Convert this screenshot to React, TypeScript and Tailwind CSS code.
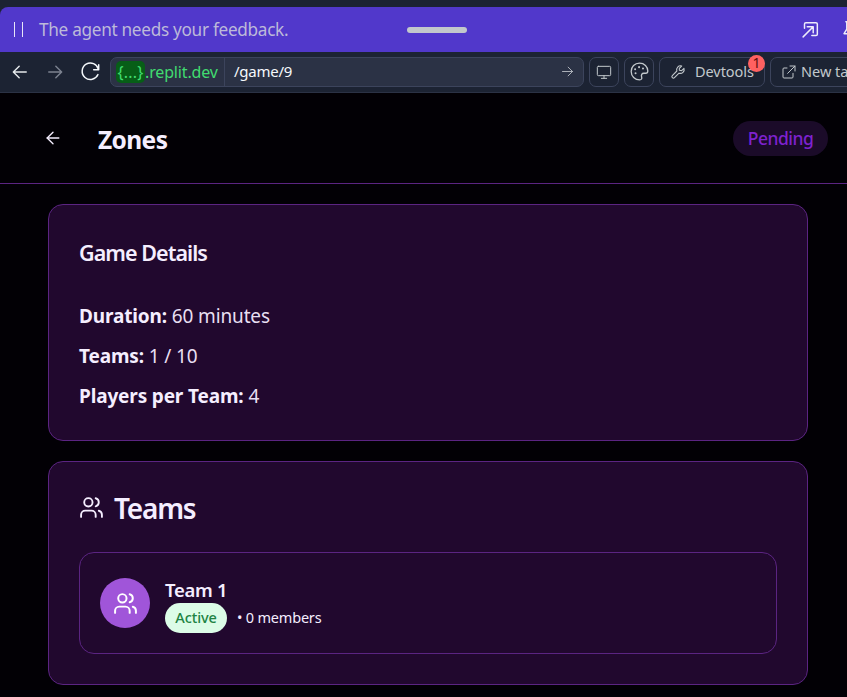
import type { ReactNode } from 'react';
import { ArrowLeft, Users } from 'lucide-react';

type GlyphProps = { size: number; className?: string; stroke?: number; children: ReactNode };

function Glyph({ size, className = '', stroke = 1.5, children }: GlyphProps) {
  return (
    <svg
      width={size}
      height={size}
      viewBox="0 0 24 24"
      fill="none"
      stroke="currentColor"
      strokeWidth={stroke}
      strokeLinecap="round"
      strokeLinejoin="round"
      className={`shrink-0 ${className}`}
    >
      {children}
    </svg>
  );
}

function AgentBanner() {
  return (
    <div className="flex h-[45px] shrink-0 items-center rounded-tl-[8px] bg-[#5138cb] pl-[14px]">
      <div className="flex w-[9px] shrink-0 justify-between">
        <span className="h-[15px] w-px bg-[#e8e6f8]" />
        <span className="h-[15px] w-px bg-[#e8e6f8]" />
      </div>
      <span className="ml-4 w-[368px] shrink-0 whitespace-nowrap text-[17.2px] leading-6 tracking-[-0.3px] text-[#bdbad9]">
        The agent needs your feedback.
      </span>
      <span className="h-[6px] w-[60px] shrink-0 rounded-full bg-[#c2c8cc]" />
      <Glyph size={22} stroke={1.6} className="ml-[332px] text-[#eeecfb]">
        <path d="M6 10V5.5A1.5 1.5 0 0 1 7.500 4H18.500A1.500 1.500 0 0 1 20 5.500V16.500A1.500 1.500 0 0 1 18.500 18H14" />
        <path d="M4.500 19.500 15.500 8.500M9 8.500h6.500V15" />
      </Glyph>
      <Glyph size={22} stroke={1.6} className="ml-[18px] text-[#eeecfb]">
        <path d="M7.500 3h9M8.500 3v8L5.500 16h13l-3-5V3M12 16v6" />
      </Glyph>
    </div>
  );
}

function BrowserBar() {
  const button = 'flex h-[30px] shrink-0 items-center rounded-[7px] border border-[#3c445c]';
  return (
    <div className="flex h-[41px] shrink-0 items-center border-b border-[#2b3245] bg-[#1c2333] pb-px text-[#c2c8cc]">
      <Glyph size={20} stroke={1.7} className="ml-[10px] text-[#e5e9ec]">
        <path d="M19.500 12H4.500M11 5l-7 7 7 7" />
      </Glyph>
      <Glyph size={20} stroke={1.7} className="ml-[15px] text-[#7c8290]">
        <path d="M4.500 12h15M13 5l7 7-7 7" />
      </Glyph>
      <Glyph size={22} stroke={1.6} className="ml-[14px] text-[#f5f9fc]">
        <path d="M21.500 4v5.500H16M21.200 9A9 9 0 1 0 20.700 14.800" />
      </Glyph>
      <div className="ml-[9px] flex h-[30px] w-[474px] shrink-0 items-center overflow-hidden rounded-[7px] border border-[#3c445c] bg-[#2b3245] text-[15px]">
        <div className="flex h-full w-[114px] shrink-0 items-center border-r border-[#3c445c] pl-[5px] text-[#41dc70]">
          <span className="flex h-[22px] w-[29px] shrink-0 items-center justify-center rounded-[5px] bg-[#075e17] text-[16px] tracking-[0.2px]">
            {'{...}'}
          </span>
          <span className="whitespace-nowrap text-[16px] tracking-[-0.15px]">.replit.dev</span>
        </div>
        <span className="ml-[9px] whitespace-nowrap tracking-[-0.25px] text-[#f5f9fc]">/game/9</span>
        <Glyph size={15} stroke={1.5} className="ml-auto mr-[8px] text-[#b4b9c0]">
          <path d="M4 12h16M13 5l7 7-7 7" />
        </Glyph>
      </div>
      <div className={`${button} ml-[5px] w-[30px] justify-center`}>
        <Glyph size={16} stroke={1.5}>
          <path d="M3.500 3.500h17A1.500 1.500 0 0 1 22 5v11a1.500 1.500 0 0 1-1.500 1.500h-17A1.500 1.500 0 0 1 2 16V5a1.500 1.500 0 0 1 1.500-1.500ZM12 17.500v4M8 21.500h8" />
        </Glyph>
      </div>
      <div className={`${button} ml-[5px] w-[30px] justify-center`}>
        <Glyph size={21} stroke={1.5}>
          <path d="M12 2.500C6.500 2.500 2.500 6.500 2.500 12c0 5.500 4.200 9.500 9.800 9.500 2 0 2.700-1.500 2.200-3-.9-2.800.2-4.500 2.500-4.500h2c1.700 0 2.500-.8 2.500-2.500C21.500 6.500 17.500 2.500 12 2.500Z" />
          <path d="M7 9.500h.01M11.500 7h.01M16 8.500h.01M7.500 14h.01" strokeWidth={2.3} />
        </Glyph>
      </div>
      <div className={`${button} relative ml-[5px] w-[106px] pl-[10px] text-[14.5px]`}>
        <Glyph size={16} stroke={1.6}>
          <path d="M17.500 3A5.800 5.800 0 0 0 10.300 10.500L3.500 17.300a2.200 2.200 0 0 0 3.200 3.200L13.500 13.700A5.800 5.800 0 0 0 21 6.500L17.500 10 14 9.500V6.500Z" />
        </Glyph>
        <span className="ml-[9px] tracking-[-0.05px]">Devtools</span>
        <span className="absolute -top-[3px] left-[88px] flex size-[17px] items-center justify-center rounded-full bg-[#ff6161] text-[14px] leading-none text-[#5c0d0d]">
          1
        </span>
      </div>
      <div className={`${button} ml-[5px] w-[110px] pl-[10px] text-[14.5px]`}>
        <Glyph size={16} stroke={1.5}>
          <path d="M13.500 3H21v7.500M21 3 10 14M9 6H4.500A1.500 1.500 0 0 0 3 7.500v12A1.500 1.500 0 0 0 4.500 21h12a1.500 1.500 0 0 0 1.500-1.500V14" />
        </Glyph>
        <span className="ml-[4px] whitespace-nowrap">New tab</span>
      </div>
    </div>
  );
}

function Detail({ label, value }: { label: string; value: string }) {
  return (
    <p className="text-[19px] leading-[30px] text-[#e8dff2]">
      <strong className="font-bold tracking-[-0.15px] text-[#f5eeff]">{label}</strong>{' '}
      <span className="tracking-[-0.15px]">{value}</span>
    </p>
  );
}

export default function App() {
  return (
    <div className="flex h-[697px] w-full flex-col overflow-hidden bg-[#1c2333] pt-[7px] font-['Noto_Sans','Open_Sans',sans-serif]">
      <AgentBanner />
      <BrowserBar />
      <div className="flex-1 bg-[#020005] text-[#f5eeff]">
        <header className="flex h-[91px] items-center border-b border-[#5b2482] pl-[43px] pr-[19px]">
          <ArrowLeft size={20} strokeWidth={1.6} />
          <h1 className="ml-[35px] mt-[3px] text-[24.500px] font-bold leading-8 tracking-[-0.6px]">Zones</h1>
          <span className="ml-auto flex h-[35px] w-[95px] items-center justify-center rounded-full bg-[#1b0b29] pt-px text-[17.5px] font-medium tracking-[-0.5px] text-[#7e22ce]">
            Pending
          </span>
        </header>
        <main className="flex flex-col gap-5 pl-12 pr-[39px] pt-5">
          <section className="h-[237px] rounded-[15px] border border-[#5b2482] bg-[#21082e] px-[30px] pt-[33px]">
            <h2 className="text-[21.5px] font-semibold leading-[30px] tracking-[-0.95px]">Game Details</h2>
            <div className="mt-[33px] flex flex-col gap-[10px]">
              <Detail label="Duration:" value="60 minutes" />
              <Detail label="Teams:" value="1 / 10" />
              <Detail label="Players per Team:" value="4" />
            </div>
          </section>
          <section className="h-[224px] rounded-[15px] border border-[#5b2482] bg-[#21082e] px-[30px] pt-[27px]">
            <h2 className="flex h-[38px] items-center text-[28px] font-semibold tracking-[-1.2px]">
              <Users size={25} strokeWidth={1.8} className="-mt-px mr-[10px]" />
              Teams
            </h2>
            <div className="mt-[25px] flex h-[102px] items-center rounded-[15px] border border-[#5b2482] px-5">
              <div className="flex size-[50px] shrink-0 items-center justify-center rounded-full bg-[#a055d9] text-white">
                <Users size={25} strokeWidth={1.9} />
              </div>
              <div className="ml-[15px] pt-[3px]">
                <h3 className="text-[18.5px] font-semibold leading-[25px] tracking-[-0.3px]">Team 1</h3>
                <div className="mt-px flex items-center">
                  <span className="flex h-[30px] w-[62px] items-center justify-center rounded-full bg-[#dcfce7] text-[14.5px] font-medium tracking-[-0.1px] text-[#218343]">
                    Active
                  </span>
                  <span className="ml-[10px] text-[14.5px] tracking-[-0.2px]">• 0 members</span>
                </div>
              </div>
            </div>
          </section>
        </main>
      </div>
    </div>
  );
}
